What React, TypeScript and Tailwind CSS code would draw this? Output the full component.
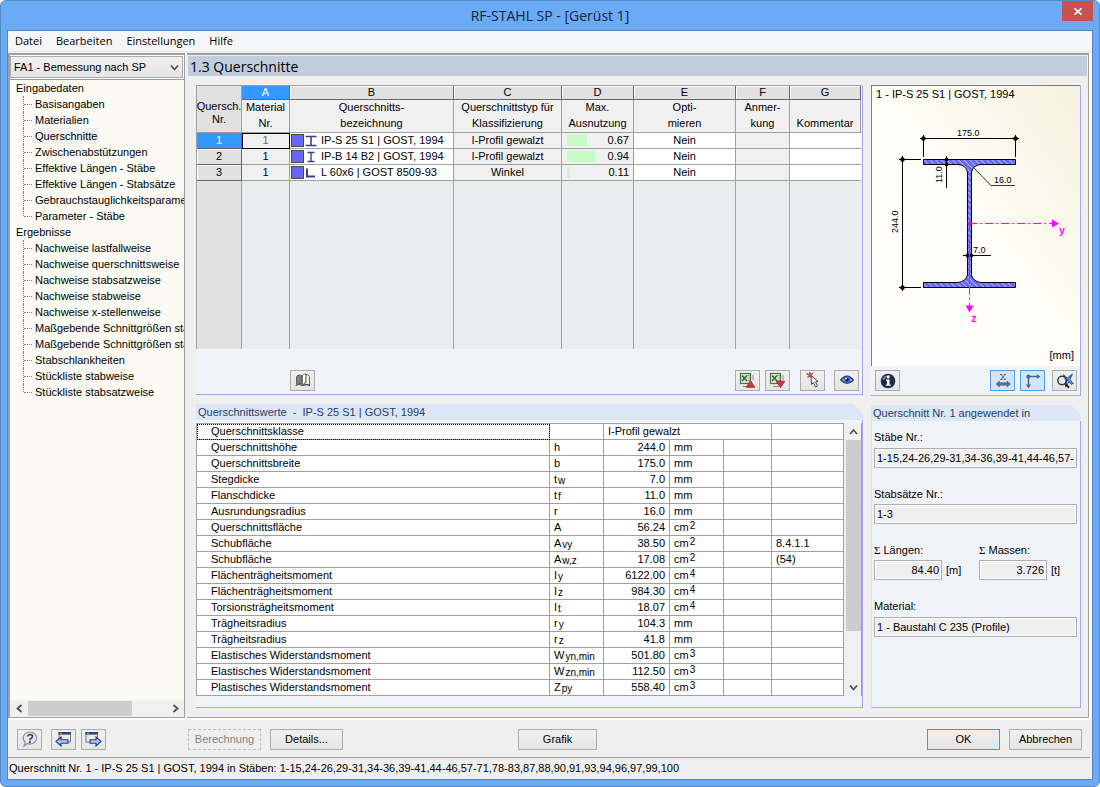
import React, { useState } from "react";

const INPUT_PAGES = [
  "Basisangaben",
  "Materialien",
  "Querschnitte",
  "Zwischenabstützungen",
  "Effektive Längen - Stäbe",
  "Effektive Längen - Stabsätze",
  "Gebrauchstauglichkeitsparameter",
  "Parameter - Stäbe",
];

const RESULT_PAGES = [
  "Nachweise lastfallweise",
  "Nachweise querschnittsweise",
  "Nachweise stabsatzweise",
  "Nachweise stabweise",
  "Nachweise x-stellenweise",
  "Maßgebende Schnittgrößen stabweise",
  "Maßgebende Schnittgrößen stabsatzweise",
  "Stabschlankheiten",
  "Stückliste stabweise",
  "Stückliste stabsatzweise",
];

type Section = {
  material: string;
  shape: "i-wide" | "i" | "l";
  name: string;
  type: string;
  ratio: number;
};

const SECTIONS: Section[] = [
  { material: "1", shape: "i-wide", name: "IP-S 25 S1 | GOST, 1994", type: "I-Profil gewalzt", ratio: 0.67 },
  { material: "1", shape: "i", name: "IP-B 14 B2 | GOST, 1994", type: "I-Profil gewalzt", ratio: 0.94 },
  { material: "1", shape: "l", name: "L 60x6 | GOST 8509-93", type: "Winkel", ratio: 0.11 },
];

const COLUMNS = [
  { letter: "A", top: "Material", bottom: "Nr." },
  { letter: "B", top: "Querschnitts-", bottom: "bezeichnung" },
  { letter: "C", top: "Querschnittstyp für", bottom: "Klassifizierung" },
  { letter: "D", top: "Max.", bottom: "Ausnutzung" },
  { letter: "E", top: "Opti-", bottom: "mieren" },
  { letter: "F", top: "Anmer-", bottom: "kung" },
  { letter: "G", top: "", bottom: "Kommentar" },
];

type Value = { label: string; sym: string; sub?: string; value: string; unit: string; exp?: string; note?: string };

const VALUES: Value[] = [
  { label: "Querschnittshöhe", sym: "h", value: "244.0", unit: "mm" },
  { label: "Querschnittsbreite", sym: "b", value: "175.0", unit: "mm" },
  { label: "Stegdicke", sym: "t", sub: "w", value: "7.0", unit: "mm" },
  { label: "Flanschdicke", sym: "t", sub: "f", value: "11.0", unit: "mm" },
  { label: "Ausrundungsradius", sym: "r", value: "16.0", unit: "mm" },
  { label: "Querschnittsfläche", sym: "A", value: "56.24", unit: "cm", exp: "2" },
  { label: "Schubfläche", sym: "A", sub: "vy", value: "38.50", unit: "cm", exp: "2", note: "8.4.1.1" },
  { label: "Schubfläche", sym: "A", sub: "w,z", value: "17.08", unit: "cm", exp: "2", note: "(54)" },
  { label: "Flächenträgheitsmoment", sym: "I", sub: "y", value: "6122.00", unit: "cm", exp: "4" },
  { label: "Flächenträgheitsmoment", sym: "I", sub: "z", value: "984.30", unit: "cm", exp: "4" },
  { label: "Torsionsträgheitsmoment", sym: "I", sub: "t", value: "18.07", unit: "cm", exp: "4" },
  { label: "Trägheitsradius", sym: "r", sub: "y", value: "104.3", unit: "mm" },
  { label: "Trägheitsradius", sym: "r", sub: "z", value: "41.8", unit: "mm" },
  { label: "Elastisches Widerstandsmoment", sym: "W", sub: "yn,min", value: "501.80", unit: "cm", exp: "3" },
  { label: "Elastisches Widerstandsmoment", sym: "W", sub: "zn,min", value: "112.50", unit: "cm", exp: "3" },
  { label: "Plastisches Widerstandsmoment", sym: "Z", sub: "py", value: "558.40", unit: "cm", exp: "3" },
];

function Chevron({ dir }: { dir: "up" | "down" | "left" | "right" }) {
  const d = {
    up: "M1 7 L4.5 3 L8 7",
    down: "M1 2.5 L4.5 6.5 L8 2.5",
    left: "M6.5 1 L2.5 4.5 L6.5 8",
    right: "M2.5 1 L6.5 4.5 L2.5 8",
  }[dir];
  return (
    <svg className="size-[9px]" viewBox="0 0 9 9" fill="none" stroke="#505050" strokeWidth="1.8" aria-hidden="true">
      <path d={d} />
    </svg>
  );
}

function ToolButton({ label, active, children }: { label: string; active?: boolean; children: React.ReactNode }) {
  return (
    <button
      type="button"
      aria-label={label}
      aria-pressed={active}
      className={
        active
          ? "flex h-[21px] w-[25px] shrink-0 items-center justify-center border border-[#569de5] bg-[#cfe5fa]"
          : "flex h-[21px] w-[25px] shrink-0 items-center justify-center border border-[#acacac] bg-linear-to-b from-[#f0f0f0] to-[#e5e5e5]"
      }
    >
      {children}
    </button>
  );
}

function TextButton({ children, variant, wide }: { children: React.ReactNode; variant?: "primary" | "disabled"; wide?: boolean }) {
  const style =
    variant === "primary"
      ? "border-[#3399ff] bg-linear-to-b from-[#f0f0f0] to-[#e5e5e5] text-black"
      : variant === "disabled"
        ? "border-dashed border-[#c0c0c0] bg-[#efefef] text-[#838383]"
        : "border-[#acacac] bg-linear-to-b from-[#f0f0f0] to-[#e5e5e5] text-black";
  return (
    <button
      type="button"
      disabled={variant === "disabled"}
      className={`h-[21px] ${wide ? "w-[79px]" : "w-[73px]"} shrink-0 border text-center ${style}`}
    >
      {children}
    </button>
  );
}

function Tree({ title, items, selected, onSelect }: { title: string; items: string[]; selected: string; onSelect: (s: string) => void }) {
  return (
    <li>
      <div className="h-4 pl-[6px]">{title}</div>
      <ul>
        {items.map((item, i) => (
          <li key={item} className="flex h-4 items-center pl-[13px]">
            <span className="flex h-4 w-[9px] shrink-0 flex-col">
              <span className={i === items.length - 1 ? "h-2 w-px border-l border-dotted border-[#808080]" : "h-4 w-px border-l border-dotted border-[#808080]"} />
            </span>
            <span className="-ml-2 w-2 shrink-0 border-t border-dotted border-[#808080]" />
            <button
              type="button"
              onClick={() => onSelect(item)}
              className={item === selected ? "ml-px h-4 bg-[#efefef] px-[2px] whitespace-nowrap" : "ml-px h-4 px-[2px] whitespace-nowrap"}
            >
              {item}
            </button>
          </li>
        ))}
      </ul>
    </li>
  );
}

function ShapeIcon({ shape }: { shape: Section["shape"] }) {
  return (
    <svg className="h-3 w-3 shrink-0" viewBox="0 0 12 12" fill="none" stroke="#3b3f86" aria-hidden="true">
      {shape === "i-wide" && <path d="M0.5 1.5H11.5M0.5 10.5H11.5M6 1.5V10.5" strokeWidth="1.6" />}
      {shape === "i" && <path d="M2.5 1.5H9.5M2.5 10.5H9.5M6 1.5V10.5" strokeWidth="1.4" />}
      {shape === "l" && <path d="M2 1.5V9.5H10" strokeWidth="2" />}
    </svg>
  );
}

function SectionTable() {
  const line = "border-[#a0a0a0]";
  return (
    <table className="w-full table-fixed border-separate border-spacing-0 border-t border-l border-[#a0a0a0] bg-[#e8eeee]">
      <colgroup>
        <col className="w-[45px]" />
        <col className="w-12" />
        <col className="w-[164px]" />
        <col className="w-[108px]" />
        <col className="w-[72px]" />
        <col className="w-[102px]" />
        <col className="w-[54px]" />
        <col />
      </colgroup>
      <thead>
        <tr className="h-[14px]">
          <th rowSpan={2} className={`border-r border-b ${line} bg-[#e1e1e1] pt-2 text-center font-normal whitespace-nowrap`}>
            <div className="-mx-1 leading-[13px]">
              Quersch.
              <br />
              Nr.
            </div>
          </th>
          {COLUMNS.map((c, i) => (
            <th
              key={c.letter}
              scope="col"
              className={
                i === 0
                  ? "h-[14px] border-r border-b border-[#696969] bg-[#3399ff] p-0 text-center leading-[13px] font-normal text-white"
                  : "h-[14px] border-r border-b border-[#696969] bg-[#e1e1e1] p-0 text-center leading-[13px] font-normal shadow-[inset_1px_1px_0_#ffffff]"
              }
            >
              {c.letter}
            </th>
          ))}
        </tr>
        <tr className="h-[33px]">
          {COLUMNS.map((c) => (
            <th key={c.letter} className={`h-[33px] border-r border-b ${line} bg-[#f0f0f0] p-0 text-center font-normal whitespace-nowrap`}>
              <div className="flex h-8 flex-col">
                <span className="h-4 leading-[15px]">{c.top}</span>
                <span className="h-4 leading-[15px]">{c.bottom}</span>
              </div>
            </th>
          ))}
        </tr>
      </thead>
      <tbody>
        {SECTIONS.map((s, i) => (
          <tr key={s.name} className="h-4 leading-[15px]">
            <th
              scope="row"
              className={
                i === 0
                  ? "h-4 border-r border-b border-[#696969] bg-[#3399ff] p-0 text-center font-normal text-white"
                  : "h-4 border-r border-b border-[#696969] bg-[#e1e1e1] p-0 text-center font-normal shadow-[inset_1px_1px_0_#ffffff]"
              }
            >
              {i + 1}
            </th>
            <td
              className={
                i === 0
                  ? "h-4 border-r border-b border-[#a0a0a0] bg-[#f0f0f0] p-0 text-center text-[#6d6d6d] outline outline-black -outline-offset-1"
                  : "h-4 border-r border-b border-[#a0a0a0] bg-[#f0f0f0] p-0 text-center"
              }
            >
              {s.material}
            </td>
            <td className={`h-4 border-r border-b ${line} bg-white p-0`}>
              <div className="flex items-center gap-px pl-px">
                <span className="size-[13px] shrink-0 border border-[#5a4632] bg-[#6666ff]" />
                <ShapeIcon shape={s.shape} />
                <span className="pl-[3px] whitespace-nowrap">{s.name}</span>
              </div>
            </td>
            <td className={`h-4 border-r border-b ${line} bg-[#f0f0f0] p-0 text-center`}>{s.type}</td>
            <td className={`h-4 border-r border-b ${line} bg-[#f0f0f0] p-0`}>
              <div className="flex items-center justify-between pr-1 pl-[5px]">
                <span className="flex h-[11px] w-[30px]">
                  <span className="h-full bg-[#c6fcc6]" style={{ width: `${s.ratio * 100}%` }} />
                </span>
                {s.ratio.toFixed(2)}
              </div>
            </td>
            <td className={`h-4 border-r border-b ${line} bg-white p-0 text-center`}>Nein</td>
            <td className={`h-4 border-r border-b ${line} bg-[#f0f0f0] p-0`} />
            <td className={`h-4 border-b ${line} bg-white p-0`} />
          </tr>
        ))}
        <tr>
          <td className={`border-r ${line} bg-[#e1e1e1] p-0`} />
          {COLUMNS.map((c) => (
            <td key={c.letter} className={c.letter === "G" ? "p-0" : `border-r ${line} p-0`} />
          ))}
        </tr>
      </tbody>
    </table>
  );
}

function GroupTitle({ children }: { children: React.ReactNode }) {
  return (
    <h2 className="h-4 shrink-0 bg-[#dce6f4] pl-[2px] text-[11px] leading-[17px] whitespace-pre text-[#1e3f66] [clip-path:polygon(0_0,calc(100%-10px)_0,100%_10px,100%_100%,0_100%)]">
      {children}
    </h2>
  );
}

function ValueTable() {
  const cell = "h-4 border-r border-b border-[#a0a0a0] p-0";
  return (
    <table className="min-w-0 flex-1 table-fixed border-separate border-spacing-0 border-t border-l border-[#a0a0a0] bg-white leading-[15px]">
      <colgroup>
        <col />
        <col className="w-[54px]" />
        <col className="w-[66px]" />
        <col className="w-[54px]" />
        <col className="w-12" />
        <col className="w-[72px]" />
      </colgroup>
      <tbody>
        <tr className="h-4">
          <th scope="row" className={`${cell} text-left font-normal outline outline-dotted outline-black -outline-offset-1`}>
            <span className="pl-[14px]">Querschnittsklasse</span>
          </th>
          <td className={cell} />
          <td className={cell} colSpan={3}>
            <span className="pl-1">I-Profil gewalzt</span>
          </td>
          <td className={cell} />
        </tr>
        {VALUES.map((v) => (
          <tr key={v.sym + (v.sub ?? "")} className="h-4">
            <th scope="row" className={`${cell} text-left font-normal`}>
              <span className="pl-[14px]">{v.label}</span>
            </th>
            <td className={cell}>
              <div className="flex h-[15px] gap-px pl-1">
                {v.sym}
                {v.sub && <span className="pt-px text-[10px] leading-[15px]">{v.sub}</span>}
              </div>
            </td>
            <td className={`${cell} text-right`}>
              <span className="pr-1">{v.value}</span>
            </td>
            <td className={cell}>
              <div className="flex h-[15px] gap-px pl-1">
                {v.unit}
                {v.exp && <span className="text-[10px] leading-[12px]">{v.exp}</span>}
              </div>
            </td>
            <td className={cell} />
            <td className={cell}>
              <span className="pl-1">{v.note}</span>
            </td>
          </tr>
        ))}
      </tbody>
    </table>
  );
}

function SectionDrawing() {
  return (
    <svg
      className="h-[220px] w-[208px]"
      viewBox="872 115 208 220"
      fill="none"
      role="img"
      aria-label="I-Profil"
      fontFamily="'Liberation Sans', Arial, sans-serif"
      fontSize="9"
    >
      <defs>
        <pattern id="hatch" width="4" height="4" patternUnits="userSpaceOnUse" patternTransform="rotate(-45)">
          <rect width="4" height="4" fill="#6666ff" />
          <rect width="1" height="4" fill="#b4b4ff" />
        </pattern>
      </defs>
      <path
        d="M923.5 159.5H1015.5V164.5H981Q973 165 971.5 172V275Q973 281.500 981 282.500H1015.500V287.500H923.500V282.500H958Q966 281.500 967.500 275V172Q966 165 958 164.500H923.500Z"
        fill="url(#hatch)"
        stroke="#000"
      />
      <g stroke="#000" strokeWidth="1">
        <path d="M920 138.500H1019M923.500 135V157M1015.500 135V157" />
        <path d="M902.500 156V291M899 159.500H921M899 287.500H921" />
        <path d="M946.500 156V188M943 159.500H950M943 164.500H950" />
        <path d="M974 168L991 185.500H1015" strokeWidth="0.8" />
        <path d="M963 255.500H991" />
      </g>
      <g fill="#000">
        <path d="M920.500 138.500l3-3 3 3-3 3z M1012.500 138.500l3-3 3 3-3 3z" />
        <path d="M899.500 159.500l3-3 3 3-3 3z M899.500 287.500l3-3 3 3-3 3z" />
        <path d="M944 159.500l2.500-2.500 2.500 2.500-2.500 2.500z M944 164.500l2.500-2.500 2.500 2.500-2.500 2.500z" />
        <path d="M965 255.500l2.500-2.500 2.500 2.500-2.500 2.500z M969 255.500l2.500-2.500 2.500 2.500-2.500 2.500z" />
        <text x="957" y="136">175.0</text>
        <text x="994" y="183">16.0</text>
        <text x="973" y="253">7.0</text>
        <text transform="translate(898 233) rotate(-90)">244.0</text>
        <text transform="translate(942 183) rotate(-90)">11.0</text>
      </g>
      <g stroke="#ff00ff">
        <path d="M969 223.500H1052" strokeDasharray="8 3 2 3" />
        <path d="M969.500 223V306" strokeDasharray="8 3 2 3" />
      </g>
      <g fill="#ff00ff">
        <path d="M1052 219.500L1059 223.500L1052 227.500Z M965.500 305.500H973.500L969.500 312.500Z" />
        <circle cx="969.500" cy="223.500" r="2" />
        <text x="1059" y="234" fontFamily="'Liberation Mono', monospace" fontSize="10" fontWeight="bold">y</text>
        <text x="971" y="322" fontFamily="'Liberation Mono', monospace" fontSize="10" fontWeight="bold">z</text>
      </g>
    </svg>
  );
}

function BookIcon() {
  return (
    <svg className="h-4 w-[18px]" viewBox="0 0 18 16" aria-hidden="true">
      <path d="M2 13V5Q4 1 8.500 3.500V13Q5 11 2 13Z" fill="#606060" />
      <path d="M4 4V11.500M6 3V11" stroke="#9a9a9a" />
      <path d="M8.500 3.500Q10.500 1.500 12 2V10.500Q10 11 8.500 13Z" fill="#fff" stroke="#555" strokeWidth=".7" />
      <path d="M12 2.500Q14 2 15.500 4.500V13Q12 11.500 8.500 13.200Q10 11 12 10.500Z" fill="#f2f1df" stroke="#444" strokeWidth=".8" />
      <path d="M1.500 13.500Q5 11.500 8.500 13.500Q12 12 16 13.500" fill="none" stroke="#444" />
    </svg>
  );
}

function ExcelIcon({ dir }: { dir: "up" | "down" }) {
  return (
    <svg className="h-4 w-[17px]" viewBox="0 0 17 16" aria-hidden="true">
      <rect x="1.500" y="1.500" width="10" height="10" fill="#dfeadb" stroke="#4b7345" strokeWidth="1.200" />
      <path d="M8.500 3.500H11M9 6H11M8.500 8.500H11" stroke="#7f9f79" />
      <path d="M3 3.500L8 9M8 3.500L3 9" stroke="#3d6e3a" strokeWidth="1.800" />
      <path d="M4 14.500H10M14 3V8" stroke="#8a8a8a" />
      {dir === "up" ? (
        <path d="M11.500 8.500L15.800 15.300H7.200Z" fill="#e3313a" stroke="#7d1b20" strokeWidth=".7" />
      ) : (
        <path d="M7.200 9.200H15.800L11.500 15.500Z" fill="#e3313a" stroke="#7d1b20" strokeWidth=".7" />
      )}
    </svg>
  );
}

function PickIcon() {
  return (
    <svg className="size-4" viewBox="0 0 16 16" aria-hidden="true">
      <path d="M1.500 1.500L8 5M8 1L2.500 5.500M4.800 0V5" stroke="#d94444" strokeWidth="1.600" />
      <path d="M6 3.500L6.500 12.500L8.500 10.500L10.500 15L12.500 14L10.500 9.800L13 9.500Z" fill="#fff" stroke="#444" />
    </svg>
  );
}

function EyeIcon() {
  return (
    <svg className="h-3 w-[14px]" viewBox="0 0 14 12" aria-hidden="true">
      <path d="M.8 6Q7 -1.500 13.200 6Q7 12.500 .8 6Z" fill="#dfe6ff" stroke="#27305c" strokeWidth="1.300" />
      <circle cx="7" cy="5.800" r="3.500" fill="#3c63dd" />
      <circle cx="7" cy="5.800" r="1.600" fill="#0b1440" />
      <circle cx="6" cy="4.600" r=".9" fill="#fff" />
    </svg>
  );
}

function InfoIcon() {
  return (
    <svg className="size-4" viewBox="0 0 16 16" aria-hidden="true">
      <circle cx="8" cy="8" r="7.300" fill="#1f2c47" />
      <path d="M2 6Q5 1 11 2.500Q6 3 4 7Z" fill="#7385a8" />
      <circle cx="8.200" cy="3.900" r="1.500" fill="#fff" />
      <path d="M6 6.500H9.500V11.500H10.800V12.800H5.800V11.500H7V7.700H6Z" fill="#fff" />
    </svg>
  );
}

function DimensionIcon() {
  return (
    <svg className="h-4 w-[18px]" viewBox="0 0 18 16" aria-hidden="true">
      <path d="M7 1.500L11 6.500M11 1.500L7 6.500M6 1.500H8.500M10 1.500H12M6 6.500H8.500M10 6.500H12" stroke="#555" strokeWidth=".8" />
      <path d="M2 11L5.500 8V9.800H13V8L16.500 11L13 14V12.200H5.500V14Z" fill="#54749f" stroke="#3c5a8a" strokeWidth=".6" />
    </svg>
  );
}

function AxesIcon() {
  return (
    <svg className="h-4 w-[18px]" viewBox="0 0 18 16" fill="none" stroke="#4a6286" aria-hidden="true">
      <path d="M4 3.500H14M4.500 3.500V12" strokeWidth="1.500" />
      <path d="M13 1.200L16.500 3.500L13 5.800ZM2 11.500L4.500 15.500L7 11.500Z" fill="#4a6286" stroke="none" />
      <circle cx="4.300" cy="3.500" r="2" fill="#4a6286" stroke="none" />
    </svg>
  );
}

function ZoomAllIcon() {
  return (
    <svg className="h-4 w-[18px]" viewBox="0 0 18 16" aria-hidden="true">
      <path d="M7.500 1.500L11.200 5L16.500 1L14 6.500L17.500 11L12.800 9L9.500 14L9.500 8Z" fill="#7ea5e0" stroke="#27508f" strokeWidth=".9" />
      <path d="M8 3L16 12M16 2L9 10" stroke="#27508f" strokeWidth=".9" />
      <circle cx="6" cy="7.500" r="4.200" fill="#e9edf3" fillOpacity=".6" stroke="#3d3d3d" strokeWidth="1.500" />
      <path d="M9 10.500L13 14.800" stroke="#2c2c2c" strokeWidth="2.200" />
    </svg>
  );
}

function HelpIcon() {
  return (
    <svg className="size-4" viewBox="0 0 16 16" aria-hidden="true">
      <path d="M8 1A6.500 6 0 1 1 5.500 12.500L2 15L3.200 11.200A6.500 6 0 0 1 8 1Z" fill="#e4e7ee" stroke="#8b909c" strokeWidth="1.200" />
      <path d="M5.800 5.500Q6 3.500 8.400 3.500Q10.800 3.700 10.500 5.800Q10 7.200 8.200 8V9.200" fill="none" stroke="#34456f" strokeWidth="1.700" />
      <circle cx="7.900" cy="11.200" r="1.100" fill="#34456f" />
    </svg>
  );
}

function WindowArrowIcon({ dir }: { dir: "left" | "right" }) {
  return (
    <svg className="h-4 w-[17px]" viewBox="0 0 17 16" aria-hidden="true">
      <g transform={dir === "left" ? "translate(3 0)" : undefined}>
        <rect x="1" y="1.500" width="11.500" height="9.500" fill="#e9e9e9" stroke="#777" />
        <rect x=".5" y="1" width="12.500" height="2.600" fill="#34456b" />
        <path d="M2 2.300H4" stroke="#8fb0ea" />
      </g>
      {dir === "left" ? (
        <path d="M1 10.500L6 6V8.700H13V12.300H6V15Z" fill="#a9c6f7" stroke="#223f86" strokeWidth="1.100" />
      ) : (
        <path d="M16 10.500L11 6V8.700H5V12.300H11V15Z" fill="#a9c6f7" stroke="#223f86" strokeWidth="1.100" />
      )}
    </svg>
  );
}

function Field({ id, value, align }: { id: string; value: string; align?: "right" }) {
  return (
    <input
      id={id}
      readOnly
      value={value}
      className={
        align === "right"
          ? "h-5 w-[68px] min-w-0 border border-[#abadb3] bg-[#efefef] px-[2px] text-right shadow-[inset_0_0_0_1px_#ffffff]"
          : "h-5 w-full min-w-0 border border-[#abadb3] bg-[#efefef] px-[2px] shadow-[inset_0_0_0_1px_#ffffff]"
      }
    />
  );
}

export default function App() {
  const [page, setPage] = useState("Querschnitte");
  return (
    <div className="flex min-h-screen flex-col rounded-md border border-[#5389c2] bg-[#6babf6] px-[6px] pb-[6px] font-['Liberation_Sans',Arial,sans-serif] text-[11px] leading-4 text-black">
      <header className="grid h-[29px] shrink-0 grid-cols-[46px_1fr_46px] items-start">
        <span />
        <h1 className="text-center font-['Open_Sans','Noto_Sans',sans-serif] text-[14px] leading-[30px] text-[#13233a]">RF-STAHL SP - [Gerüst 1]</h1>
        <button type="button" aria-label="Schließen" className="flex h-5 w-[31px] items-center justify-center justify-self-end bg-[#c75050]">
          <svg className="h-[7px] w-2" viewBox="0 0 8 7" stroke="#fff" strokeWidth="1.700" aria-hidden="true">
            <path d="M.5 .3L7.500 6.700M7.500 .3L.5 6.700" />
          </svg>
        </button>
      </header>

      <div className="flex min-w-0 flex-1 flex-col border border-[#5389c2] bg-[#efefef]">
        <nav className="flex h-[21px] shrink-0 items-center gap-[14px] border-b border-[#e8e8e8] bg-[#f5f6f7] px-[7px] font-['Open_Sans','Noto_Sans',sans-serif] text-[11px]">
          {["Datei", "Bearbeiten", "Einstellungen", "Hilfe"].map((m) => (
            <button key={m} type="button">
              {m}
            </button>
          ))}
        </nav>

        <div className="mt-px flex min-h-0 flex-1">
          <aside className="flex w-[177px] shrink-0 flex-col border-t-2 border-r border-b border-l-2 border-[#a0a0a0] bg-[#fcfbf3]">
            <div className="relative mr-px pt-px">
              <select
                aria-label="Bemessungsfall"
                className="block h-[22px] w-full appearance-none border border-[#acacac] bg-linear-to-b from-[#f0f0f0] to-[#e5e5e5] pl-[3px]"
              >
                <option>FA1 - Bemessung nach SP</option>
              </select>
              <span className="pointer-events-none absolute top-2 right-1">
                <Chevron dir="down" />
              </span>
            </div>
            <div className="mt-px flex min-h-0 flex-1 flex-col overflow-hidden border-t border-[#a0a0a0]">
              <ul className="flex-1 overflow-hidden">
                <Tree title="Eingabedaten" items={INPUT_PAGES} selected={page} onSelect={setPage} />
                <Tree title="Ergebnisse" items={RESULT_PAGES} selected={page} onSelect={setPage} />
              </ul>
              <div className="flex h-[17px] items-center bg-[#f0f0f0]">
                <span className="flex w-[18px] justify-center">
                  <Chevron dir="left" />
                </span>
                <span className="flex h-[15px] flex-1">
                  <span className="h-full w-3/4 bg-[#cdcdcd]" />
                </span>
                <span className="flex w-[18px] justify-center">
                  <Chevron dir="right" />
                </span>
              </div>
            </div>
          </aside>

          <main className="ml-[2px] flex min-w-0 flex-1 flex-col border-t-2 border-r border-b border-[#a0a0a0]">
            <h2 className="mt-px mr-px ml-px h-5 bg-[#c0cddb] pl-[2px] font-['Open_Sans','Noto_Sans',sans-serif] text-[14px] leading-[22px]">1.3 Querschnitte</h2>
            <div className="flex flex-1 gap-2 pt-[9px] pr-[7px] pb-[9px] pl-[9px]">
              <div className="flex min-w-0 flex-1 flex-col gap-[9px]">
                <section className="flex flex-1 flex-col border-r border-b border-[#a5a5ec] bg-[#f0f4f9]">
                  <div className="flex flex-1 pr-px">
                    <SectionTable />
                  </div>
                  <div className="flex h-[45px] shrink-0 items-center pt-[17px] pr-[3px] pl-[94px]">
                    <ToolButton label="Bibliothek">
                      <BookIcon />
                    </ToolButton>
                    <span className="flex-1" />
                    <div className="flex">
                      <ToolButton label="Excel-Export">
                        <ExcelIcon dir="up" />
                      </ToolButton>
                      <span className="w-[5px]" />
                      <ToolButton label="Excel-Import">
                        <ExcelIcon dir="down" />
                      </ToolButton>
                      <span className="w-[10px]" />
                      <ToolButton label="Auswählen">
                        <PickIcon />
                      </ToolButton>
                      <span className="w-[9px]" />
                      <ToolButton label="Ansicht">
                        <EyeIcon />
                      </ToolButton>
                    </div>
                  </div>
                </section>

                <section className="flex shrink-0 flex-col">
                  <GroupTitle>{"Querschnittswerte  -  IP-S 25 S1 | GOST, 1994"}</GroupTitle>
                  <div className="border-r border-b border-[#a5a5ec] bg-[#f0f4f9] pt-[3px] pb-[11px]">
                    <div className="flex border-r border-[#a0a0a0]">
                      <ValueTable />
                      <div className="flex w-[17px] shrink-0 flex-col items-center bg-[#f0f0f0] pl-px">
                        <span className="flex h-[17px] items-center">
                          <Chevron dir="up" />
                        </span>
                        <span className="flex w-[15px] flex-1 flex-col">
                          <span className="h-4/5 bg-[#cdcdcd]" />
                        </span>
                        <span className="flex h-[17px] items-center">
                          <Chevron dir="down" />
                        </span>
                      </div>
                    </div>
                  </div>
                </section>
              </div>

              <div className="flex w-[210px] shrink-0 flex-col gap-[9px]">
                <section className="flex flex-1 flex-col border-r border-b border-[#a5a5ec] bg-[#f0f4f9]">
                  <div className="flex flex-1 flex-col justify-between border-t border-l border-[#808080] bg-linear-to-tr from-white via-[#fffdf7] to-[#f7f2de]">
                    <p className="pl-1">1 - IP-S 25 S1 | GOST, 1994</p>
                    <SectionDrawing />
                    <p className="pr-[6px] pb-[3px] text-right">[mm]</p>
                  </div>
                  <div className="flex h-[29px] shrink-0 items-center pr-[3px] pl-1">
                    <ToolButton label="Info">
                      <InfoIcon />
                    </ToolButton>
                    <span className="flex-1" />
                    <ToolButton label="Bemaßung" active>
                      <DimensionIcon />
                    </ToolButton>
                    <span className="w-[5px]" />
                    <ToolButton label="Achsen" active>
                      <AxesIcon />
                    </ToolButton>
                    <span className="w-[7px]" />
                    <ToolButton label="Alles zeigen">
                      <ZoomAllIcon />
                    </ToolButton>
                  </div>
                </section>

                <section className="flex h-[303px] shrink-0 flex-col">
                  <GroupTitle>Querschnitt Nr. 1 angewendet in</GroupTitle>
                  <div className="flex flex-1 flex-col border-r border-b border-l border-r-[#a5a5ec] border-b-[#a5a5ec] border-l-[#dce6f4] bg-[#f0f4f9] pt-2 pr-[3px] pl-[2px]">
                    <label htmlFor="members" className="mb-[3px]">
                      Stäbe Nr.:
                    </label>
                    <Field id="members" value="1-15,24-26,29-31,34-36,39-41,44-46,57-71,78-83,87,88,90,91,93,94,96,97,99,100" />
                    <label htmlFor="sets" className="mt-[18px] mb-[2px]">
                      Stabsätze Nr.:
                    </label>
                    <Field id="sets" value="1-3" />
                    <div className="mt-[18px] flex">
                      <div className="w-[105px]">
                        <label htmlFor="lengths" className="mb-[2px] block">
                          <span className="font-['Liberation_Serif',serif]">Σ</span> Längen:
                        </label>
                        <Field id="lengths" value="84.40" align="right" />
                        <span className="pl-1">[m]</span>
                      </div>
                      <div>
                        <label htmlFor="masses" className="mb-[2px] block">
                          <span className="font-['Liberation_Serif',serif]">Σ</span> Massen:
                        </label>
                        <Field id="masses" value="3.726" align="right" />
                        <span className="pl-1">[t]</span>
                      </div>
                    </div>
                    <label htmlFor="material" className="mt-[18px] mb-[3px]">
                      Material:
                    </label>
                    <Field id="material" value="1 - Baustahl C 235 (Profile)" />
                  </div>
                </section>
              </div>
            </div>
          </main>
          <span className="w-[3px] shrink-0 bg-white" />
        </div>

        <div className="flex h-[39px] shrink-0 items-center border-t-2 border-white pt-px pr-[10px] pl-[9px]">
          <ToolButton label="Hilfe">
            <HelpIcon />
          </ToolButton>
          <span className="w-[9px]" />
          <ToolButton label="Zurück">
            <WindowArrowIcon dir="left" />
          </ToolButton>
          <span className="w-[5px]" />
          <ToolButton label="Weiter">
            <WindowArrowIcon dir="right" />
          </ToolButton>
          <span className="w-[82px]" />
          <TextButton variant="disabled">Berechnung</TextButton>
          <span className="w-[9px]" />
          <TextButton>Details...</TextButton>
          <span className="flex-1" />
          <TextButton wide>Grafik</TextButton>
          <span className="flex-1" />
          <span className="w-[155px]" />
          <TextButton variant="primary">OK</TextButton>
          <span className="w-[9px]" />
          <TextButton>Abbrechen</TextButton>
        </div>
        <footer className="mr-[2px] h-[22px] shrink-0 truncate border-t border-[#a0a0a0] pl-px leading-5">
          Querschnitt Nr. 1 - IP-S 25 S1 | GOST, 1994 in Stäben: 1-15,24-26,29-31,34-36,39-41,44-46,57-71,78-83,87,88,90,91,93,94,96,97,99,100
        </footer>
      </div>
    </div>
  );
}
